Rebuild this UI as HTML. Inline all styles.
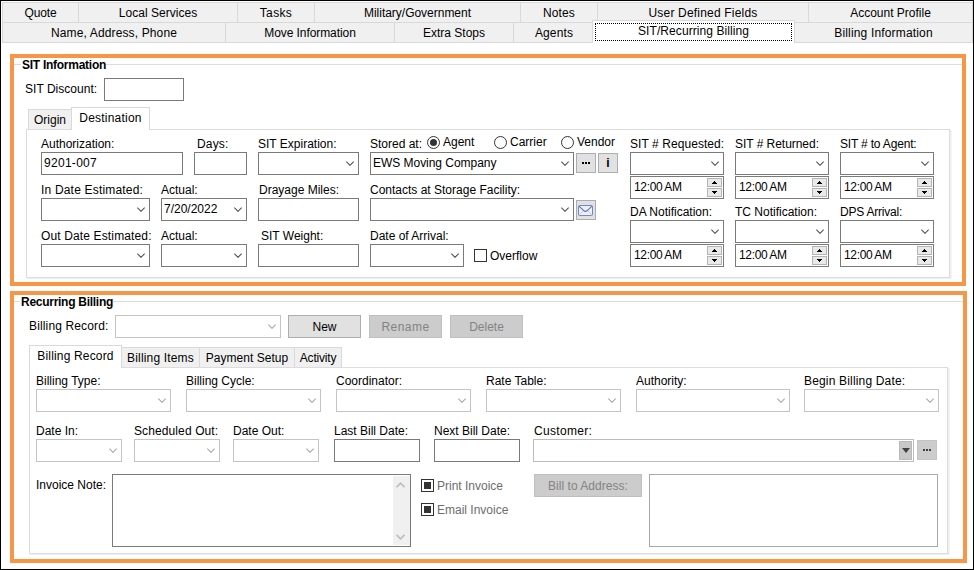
<!DOCTYPE html>
<html><head><meta charset="utf-8"><title>SIT/Recurring Billing</title>
<style>
html,body{margin:0;padding:0;}
body{width:974px;height:570px;position:relative;overflow:hidden;background:#fff;font-family:"Liberation Sans",sans-serif;font-size:12px;color:#000;}
div{position:absolute;box-sizing:border-box;}
.t{white-space:nowrap;line-height:14px;height:14px;font-size:12px;}
.b{font-weight:bold;}
.combo{background:#fff;}
.combo .val{position:absolute;left:2px;top:50%;margin-top:-8px;line-height:14px;white-space:nowrap;}
.chev{position:absolute;right:4px;top:50%;margin-top:-2.1px;}
.btn{text-align:center;font-size:12px;display:flex;align-items:center;justify-content:center;}
.tab{background:#f0f0f0;border:1px solid #d9d9d9;white-space:nowrap;}
.tab span,.stab span{position:absolute;left:0;right:0;text-align:center;white-space:nowrap;}
.stab{background:#fff;border:1px solid #d9d9d9;border-bottom:none;}
.spu,.spd{position:absolute;right:1px;width:15px;height:9px;background:#e9e9e9;border:1px solid #b4b4b4;box-sizing:border-box;}
.spu{top:1px}.spd{bottom:1px}
.ar{position:absolute;left:4px;top:2px;display:block;}
.pane{border:1px solid #dcdcdc;box-shadow:1px 1px 0 #efefef, 2px 1px 0 #f4f4f4;}
</style></head><body>

<div style="left:0px;top:0px;width:974px;height:570px;border:1px solid #000;"></div>
<div class="tab" style="left:2px;top:2px;width:77px;height:21px;"><span style="top:3px;line-height:14px;letter-spacing:-0.134px;">Quote</span></div>
<div class="tab" style="left:78px;top:2px;width:160px;height:21px;"><span style="top:3px;line-height:14px;letter-spacing:0.033px;">Local Services</span></div>
<div class="tab" style="left:237px;top:2px;width:78px;height:21px;"><span style="top:3px;line-height:14px;letter-spacing:0.366px;">Tasks</span></div>
<div class="tab" style="left:314px;top:2px;width:207px;height:21px;"><span style="top:3px;line-height:14px;letter-spacing:-0.019px;">Military/Government</span></div>
<div class="tab" style="left:520px;top:2px;width:78px;height:21px;"><span style="top:3px;line-height:14px;letter-spacing:0.131px;">Notes</span></div>
<div class="tab" style="left:597px;top:2px;width:212px;height:21px;"><span style="top:3px;line-height:14px;letter-spacing:0.191px;">User Defined Fields</span></div>
<div class="tab" style="left:808px;top:2px;width:165px;height:21px;"><span style="top:3px;line-height:14px;">Account Profile</span></div>
<div class="tab" style="left:2px;top:22px;width:224px;height:21px;"><span style="top:3px;line-height:14px;letter-spacing:0.131px;">Name, Address, Phone</span></div>
<div class="tab" style="left:225px;top:22px;width:170px;height:21px;"><span style="top:3px;line-height:14px;letter-spacing:-0.074px;">Move Information</span></div>
<div class="tab" style="left:394px;top:22px;width:120px;height:21px;"><span style="top:3px;line-height:14px;">Extra Stops</span></div>
<div class="tab" style="left:513px;top:22px;width:82px;height:21px;"><span style="top:3px;line-height:14px;letter-spacing:0.143px;">Agents</span></div>
<div class="tab" style="left:794px;top:22px;width:179px;height:21px;"><span style="top:3px;line-height:14px;letter-spacing:0.164px;">Billing Information</span></div>
<div class="stab" style="left:592px;top:20px;width:203px;height:23px;"><span style="top:3px;line-height:14px;letter-spacing:0.077px;">SIT/Recurring Billing</span></div>
<div style="left:595px;top:23px;width:197px;height:18px;border:1px dotted #000;"></div>
<div style="left:10px;top:54px;width:956px;height:232px;border:4px solid #f79646;"></div>
<div style="left:14px;top:64px;width:948px;height:1px;background:#dcdcdc;"></div>
<div class="t b" style="left:21px;top:58px;letter-spacing:-0.265px;background:#fff;padding:0 0 0 1px;">SIT Information</div>
<div class="t" style="left:25px;top:82px;letter-spacing:0.032px;">SIT Discount:</div>
<div class="combo" style="left:104px;top:78px;width:80px;height:23px;border:1px solid #7a7a7a;"></div>
<div class="tab" style="left:28px;top:109px;width:44px;height:21px;"><span style="top:3px;line-height:14px;">Origin</span></div>
<div class="pane" style="left:26px;top:129px;width:924px;height:149px;"></div>
<div class="stab" style="left:71px;top:107px;width:79px;height:23px;"><span style="top:3px;line-height:14px;letter-spacing:0.224px;">Destination</span></div>
<div class="t" style="left:41px;top:137px;">Authorization:</div>
<div class="combo" style="left:41px;top:152px;width:142px;height:23px;border:1px solid #7a7a7a;"><span class="val" style="letter-spacing:0.287px;">9201-007</span></div>
<div class="t" style="left:197px;top:137px;letter-spacing:0.166px;">Days:</div>
<div class="combo" style="left:194px;top:152px;width:53px;height:23px;border:1px solid #7a7a7a;"></div>
<div class="t" style="left:258px;top:137px;">SIT Expiration:</div>
<div class="combo" style="left:258px;top:152px;width:101px;height:23px;border:1px solid #7a7a7a;"><svg class="chev" width="8" height="5" viewBox="0 0 8 5"><path d="M0.3 0.6 L4 4.3 L7.7 0.6" fill="none" stroke="#505050" stroke-width="1.15"/></svg></div>
<div class="t" style="left:370px;top:137px;">Stored at:</div>
<div style="left:427.0px;top:136.0px;width:13px;height:13px;border:1px solid #333;border-radius:50%;background:#fff;"><i style="position:absolute;left:2px;top:2px;width:7px;height:7px;border-radius:50%;background:#333;"></i></div>
<div class="t" style="left:443px;top:135px;">Agent</div>
<div style="left:494.0px;top:136.0px;width:13px;height:13px;border:1px solid #333;border-radius:50%;background:#fff;"></div>
<div class="t" style="left:510px;top:135px;">Carrier</div>
<div style="left:561.0px;top:136.0px;width:13px;height:13px;border:1px solid #333;border-radius:50%;background:#fff;"></div>
<div class="t" style="left:577px;top:135px;">Vendor</div>
<div class="combo" style="left:370px;top:152px;width:204px;height:23px;border:1px solid #7a7a7a;"><span class="val" style="letter-spacing:-0.035px;">EWS Moving Company</span><svg class="chev" width="8" height="5" viewBox="0 0 8 5"><path d="M0.3 0.6 L4 4.3 L7.7 0.6" fill="none" stroke="#505050" stroke-width="1.15"/></svg></div>
<div class="btn" style="left:576px;top:153px;width:20px;height:20px;background:#e1e1e1;border:1px solid #adadad;color:#000;"><svg width="8" height="2" viewBox="0 0 8 2" style="position:relative;top:0px"><rect x="0" y="0" width="2" height="2" fill="#000"/><rect x="3" y="0" width="2" height="2" fill="#000"/><rect x="6" y="0" width="2" height="2" fill="#000"/></svg></div>
<div class="btn" style="left:598px;top:153px;width:20px;height:20px;background:#e1e1e1;border:1px solid #adadad;color:#000;"><b>i</b></div>
<div class="t" style="left:41px;top:183px;letter-spacing:0.185px;">In Date Estimated:</div>
<div class="combo" style="left:41px;top:198px;width:109px;height:23px;border:1px solid #7a7a7a;"><svg class="chev" width="8" height="5" viewBox="0 0 8 5"><path d="M0.3 0.6 L4 4.3 L7.7 0.6" fill="none" stroke="#505050" stroke-width="1.15"/></svg></div>
<div class="t" style="left:161px;top:183px;">Actual:</div>
<div class="combo" style="left:161px;top:198px;width:86px;height:23px;border:1px solid #7a7a7a;"><span class="val" style="">7/20/2022</span><svg class="chev" width="8" height="5" viewBox="0 0 8 5"><path d="M0.3 0.6 L4 4.3 L7.7 0.6" fill="none" stroke="#505050" stroke-width="1.15"/></svg></div>
<div class="t" style="left:259px;top:183px;">Drayage Miles:</div>
<div class="combo" style="left:258px;top:198px;width:101px;height:23px;border:1px solid #7a7a7a;"></div>
<div class="t" style="left:370px;top:183px;">Contacts at Storage Facility:</div>
<div class="combo" style="left:370px;top:198px;width:204px;height:23px;border:1px solid #7a7a7a;"><svg class="chev" width="8" height="5" viewBox="0 0 8 5"><path d="M0.3 0.6 L4 4.3 L7.7 0.6" fill="none" stroke="#505050" stroke-width="1.15"/></svg></div>
<div class="btn" style="left:576px;top:200px;width:20px;height:20px;background:#e1e1e1;border:1px solid #adadad;color:#000;"><svg style="position:absolute;left:1px;top:4px" width="15" height="11" viewBox="0 0 15 11"><rect x="0.5" y="0.5" width="14" height="10" rx="1" fill="#eef1fc" stroke="#7486cb"/><path d="M1 10 L5.6 5.6 M14 10 L9.4 5.6" fill="none" stroke="#c3cbec"/><path d="M1 1.2 L6 5.8 Q7.5 7 9 5.8 L14 1.2" fill="none" stroke="#5b6eb8" stroke-width="1.1"/></svg></div>
<div class="t" style="left:41px;top:229px;letter-spacing:0.137px;">Out Date Estimated:</div>
<div class="combo" style="left:41px;top:244px;width:109px;height:23px;border:1px solid #7a7a7a;"><svg class="chev" width="8" height="5" viewBox="0 0 8 5"><path d="M0.3 0.6 L4 4.3 L7.7 0.6" fill="none" stroke="#505050" stroke-width="1.15"/></svg></div>
<div class="t" style="left:161px;top:229px;">Actual:</div>
<div class="combo" style="left:161px;top:244px;width:86px;height:23px;border:1px solid #7a7a7a;"><svg class="chev" width="8" height="5" viewBox="0 0 8 5"><path d="M0.3 0.6 L4 4.3 L7.7 0.6" fill="none" stroke="#505050" stroke-width="1.15"/></svg></div>
<div class="t" style="left:261px;top:229px;">SIT Weight:</div>
<div class="combo" style="left:258px;top:244px;width:101px;height:23px;border:1px solid #7a7a7a;"></div>
<div class="t" style="left:370px;top:229px;">Date of Arrival:</div>
<div class="combo" style="left:370px;top:244px;width:94px;height:23px;border:1px solid #7a7a7a;"><svg class="chev" width="8" height="5" viewBox="0 0 8 5"><path d="M0.3 0.6 L4 4.3 L7.7 0.6" fill="none" stroke="#505050" stroke-width="1.15"/></svg></div>
<div style="left:474px;top:249px;width:13px;height:13px;border:1px solid #333;background:#fff;"></div>
<div class="t" style="left:490px;top:249px;">Overflow</div>
<div class="t" style="left:630px;top:137px;letter-spacing:0.067px;">SIT # Requested:</div>
<div class="combo" style="left:630px;top:152px;width:94px;height:23px;border:1px solid #7a7a7a;"><svg class="chev" width="8" height="5" viewBox="0 0 8 5"><path d="M0.3 0.6 L4 4.3 L7.7 0.6" fill="none" stroke="#505050" stroke-width="1.15"/></svg></div>
<div class="combo" style="left:630px;top:176px;width:94px;height:23px;border:1px solid #7a7a7a;"><span class="val" style="left:3px;letter-spacing:-0.33px;word-spacing:-0.5px;">12:00 AM</span><span class="spu"><svg class="ar" width="5" height="3" viewBox="0 0 5 3" shape-rendering="crispEdges"><path d="M2 0h1v1h1v1h1v1h-5v-1h1v-1h1z" fill="#000"/></svg></span><span class="spd"><svg class="ar" width="5" height="3" viewBox="0 0 5 3" shape-rendering="crispEdges"><path d="M0 0h5v1h-1v1h-1v1h-1v-1h-1v-1h-1z" fill="#000"/></svg></span></div>
<div class="t" style="left:630px;top:205px;">DA Notification:</div>
<div class="combo" style="left:630px;top:220px;width:94px;height:23px;border:1px solid #7a7a7a;"><svg class="chev" width="8" height="5" viewBox="0 0 8 5"><path d="M0.3 0.6 L4 4.3 L7.7 0.6" fill="none" stroke="#505050" stroke-width="1.15"/></svg></div>
<div class="combo" style="left:630px;top:244px;width:94px;height:23px;border:1px solid #7a7a7a;"><span class="val" style="left:3px;letter-spacing:-0.33px;word-spacing:-0.5px;">12:00 AM</span><span class="spu"><svg class="ar" width="5" height="3" viewBox="0 0 5 3" shape-rendering="crispEdges"><path d="M2 0h1v1h1v1h1v1h-5v-1h1v-1h1z" fill="#000"/></svg></span><span class="spd"><svg class="ar" width="5" height="3" viewBox="0 0 5 3" shape-rendering="crispEdges"><path d="M0 0h5v1h-1v1h-1v1h-1v-1h-1v-1h-1z" fill="#000"/></svg></span></div>
<div class="t" style="left:735px;top:137px;letter-spacing:-0.037px;">SIT # Returned:</div>
<div class="combo" style="left:735px;top:152px;width:94px;height:23px;border:1px solid #7a7a7a;"><svg class="chev" width="8" height="5" viewBox="0 0 8 5"><path d="M0.3 0.6 L4 4.3 L7.7 0.6" fill="none" stroke="#505050" stroke-width="1.15"/></svg></div>
<div class="combo" style="left:735px;top:176px;width:94px;height:23px;border:1px solid #7a7a7a;"><span class="val" style="left:3px;letter-spacing:-0.33px;word-spacing:-0.5px;">12:00 AM</span><span class="spu"><svg class="ar" width="5" height="3" viewBox="0 0 5 3" shape-rendering="crispEdges"><path d="M2 0h1v1h1v1h1v1h-5v-1h1v-1h1z" fill="#000"/></svg></span><span class="spd"><svg class="ar" width="5" height="3" viewBox="0 0 5 3" shape-rendering="crispEdges"><path d="M0 0h5v1h-1v1h-1v1h-1v-1h-1v-1h-1z" fill="#000"/></svg></span></div>
<div class="t" style="left:735px;top:205px;">TC Notification:</div>
<div class="combo" style="left:735px;top:220px;width:94px;height:23px;border:1px solid #7a7a7a;"><svg class="chev" width="8" height="5" viewBox="0 0 8 5"><path d="M0.3 0.6 L4 4.3 L7.7 0.6" fill="none" stroke="#505050" stroke-width="1.15"/></svg></div>
<div class="combo" style="left:735px;top:244px;width:94px;height:23px;border:1px solid #7a7a7a;"><span class="val" style="left:3px;letter-spacing:-0.33px;word-spacing:-0.5px;">12:00 AM</span><span class="spu"><svg class="ar" width="5" height="3" viewBox="0 0 5 3" shape-rendering="crispEdges"><path d="M2 0h1v1h1v1h1v1h-5v-1h1v-1h1z" fill="#000"/></svg></span><span class="spd"><svg class="ar" width="5" height="3" viewBox="0 0 5 3" shape-rendering="crispEdges"><path d="M0 0h5v1h-1v1h-1v1h-1v-1h-1v-1h-1z" fill="#000"/></svg></span></div>
<div class="t" style="left:840px;top:137px;letter-spacing:-0.181px;">SIT # to Agent:</div>
<div class="combo" style="left:840px;top:152px;width:94px;height:23px;border:1px solid #7a7a7a;"><svg class="chev" width="8" height="5" viewBox="0 0 8 5"><path d="M0.3 0.6 L4 4.3 L7.7 0.6" fill="none" stroke="#505050" stroke-width="1.15"/></svg></div>
<div class="combo" style="left:840px;top:176px;width:94px;height:23px;border:1px solid #7a7a7a;"><span class="val" style="left:3px;letter-spacing:-0.33px;word-spacing:-0.5px;">12:00 AM</span><span class="spu"><svg class="ar" width="5" height="3" viewBox="0 0 5 3" shape-rendering="crispEdges"><path d="M2 0h1v1h1v1h1v1h-5v-1h1v-1h1z" fill="#000"/></svg></span><span class="spd"><svg class="ar" width="5" height="3" viewBox="0 0 5 3" shape-rendering="crispEdges"><path d="M0 0h5v1h-1v1h-1v1h-1v-1h-1v-1h-1z" fill="#000"/></svg></span></div>
<div class="t" style="left:840px;top:205px;letter-spacing:-0.224px;">DPS Arrival:</div>
<div class="combo" style="left:840px;top:220px;width:94px;height:23px;border:1px solid #7a7a7a;"><svg class="chev" width="8" height="5" viewBox="0 0 8 5"><path d="M0.3 0.6 L4 4.3 L7.7 0.6" fill="none" stroke="#505050" stroke-width="1.15"/></svg></div>
<div class="combo" style="left:840px;top:244px;width:94px;height:23px;border:1px solid #7a7a7a;"><span class="val" style="left:3px;letter-spacing:-0.33px;word-spacing:-0.5px;">12:00 AM</span><span class="spu"><svg class="ar" width="5" height="3" viewBox="0 0 5 3" shape-rendering="crispEdges"><path d="M2 0h1v1h1v1h1v1h-5v-1h1v-1h1z" fill="#000"/></svg></span><span class="spd"><svg class="ar" width="5" height="3" viewBox="0 0 5 3" shape-rendering="crispEdges"><path d="M0 0h5v1h-1v1h-1v1h-1v-1h-1v-1h-1z" fill="#000"/></svg></span></div>
<div style="left:10px;top:291px;width:957px;height:272px;border:4px solid #f79646;"></div>
<div style="left:14px;top:301px;width:949px;height:1px;background:#dcdcdc;"></div>
<div class="t b" style="left:20px;top:295px;letter-spacing:-0.273px;background:#fff;padding:0 0 0 1px;">Recurring Billing</div>
<div class="t" style="left:29px;top:319px;letter-spacing:0.142px;">Billing Record:</div>
<div class="combo" style="left:115px;top:315px;width:166px;height:23px;border:1px solid #c4c4c4;"><svg class="chev" width="8" height="5" viewBox="0 0 8 5"><path d="M0.3 0.6 L4 4.3 L7.7 0.6" fill="none" stroke="#a6a6a6" stroke-width="1.15"/></svg></div>
<div class="btn" style="left:288px;top:315px;width:73px;height:23px;background:#e1e1e1;border:1px solid #adadad;color:#000;">New</div>
<div class="btn" style="left:369px;top:315px;width:73px;height:23px;background:#cccccc;border:1px solid #bfbfbf;color:#838383;"><span style="letter-spacing:0.440px;">Rename</span></div>
<div class="btn" style="left:450px;top:315px;width:73px;height:23px;background:#cccccc;border:1px solid #bfbfbf;color:#838383;">Delete</div>
<div class="tab" style="left:121px;top:347px;width:79px;height:21px;"><span style="top:3px;line-height:14px;letter-spacing:0.162px;">Billing Items</span></div>
<div class="tab" style="left:199px;top:347px;width:96px;height:21px;"><span style="top:3px;line-height:14px;letter-spacing:0.030px;">Payment Setup</span></div>
<div class="tab" style="left:294px;top:347px;width:48px;height:21px;"><span style="top:3px;line-height:14px;letter-spacing:-0.188px;">Activity</span></div>
<div class="pane" style="left:29px;top:367px;width:919px;height:187px;"></div>
<div class="stab" style="left:29px;top:345px;width:93px;height:23px;"><span style="top:3px;line-height:14px;letter-spacing:0.161px;">Billing Record</span></div>
<div class="t" style="left:36px;top:374px;">Billing Type:</div>
<div class="t" style="left:186px;top:374px;">Billing Cycle:</div>
<div class="t" style="left:336px;top:374px;">Coordinator:</div>
<div class="t" style="left:486px;top:374px;">Rate Table:</div>
<div class="t" style="left:636px;top:374px;">Authority:</div>
<div class="t" style="left:804px;top:374px;letter-spacing:0.171px;">Begin Billing Date:</div>
<div class="combo" style="left:36px;top:389px;width:135px;height:23px;border:1px solid #c4c4c4;"><svg class="chev" width="8" height="5" viewBox="0 0 8 5"><path d="M0.3 0.6 L4 4.3 L7.7 0.6" fill="none" stroke="#a6a6a6" stroke-width="1.15"/></svg></div>
<div class="combo" style="left:186px;top:389px;width:135px;height:23px;border:1px solid #c4c4c4;"><svg class="chev" width="8" height="5" viewBox="0 0 8 5"><path d="M0.3 0.6 L4 4.3 L7.7 0.6" fill="none" stroke="#a6a6a6" stroke-width="1.15"/></svg></div>
<div class="combo" style="left:336px;top:389px;width:135px;height:23px;border:1px solid #c4c4c4;"><svg class="chev" width="8" height="5" viewBox="0 0 8 5"><path d="M0.3 0.6 L4 4.3 L7.7 0.6" fill="none" stroke="#a6a6a6" stroke-width="1.15"/></svg></div>
<div class="combo" style="left:486px;top:389px;width:135px;height:23px;border:1px solid #c4c4c4;"><svg class="chev" width="8" height="5" viewBox="0 0 8 5"><path d="M0.3 0.6 L4 4.3 L7.7 0.6" fill="none" stroke="#a6a6a6" stroke-width="1.15"/></svg></div>
<div class="combo" style="left:636px;top:389px;width:154px;height:23px;border:1px solid #c4c4c4;"><svg class="chev" width="8" height="5" viewBox="0 0 8 5"><path d="M0.3 0.6 L4 4.3 L7.7 0.6" fill="none" stroke="#a6a6a6" stroke-width="1.15"/></svg></div>
<div class="combo" style="left:804px;top:389px;width:135px;height:23px;border:1px solid #c4c4c4;"><svg class="chev" width="8" height="5" viewBox="0 0 8 5"><path d="M0.3 0.6 L4 4.3 L7.7 0.6" fill="none" stroke="#a6a6a6" stroke-width="1.15"/></svg></div>
<div class="t" style="left:36px;top:424px;">Date In:</div>
<div class="t" style="left:134px;top:424px;letter-spacing:0.108px;">Scheduled Out:</div>
<div class="t" style="left:233px;top:424px;">Date Out:</div>
<div class="t" style="left:334px;top:424px;">Last Bill Date:</div>
<div class="t" style="left:434px;top:424px;">Next Bill Date:</div>
<div class="t" style="left:534px;top:424px;letter-spacing:0.317px;">Customer:</div>
<div class="combo" style="left:36px;top:439px;width:86px;height:23px;border:1px solid #c4c4c4;"><svg class="chev" width="8" height="5" viewBox="0 0 8 5"><path d="M0.3 0.6 L4 4.3 L7.7 0.6" fill="none" stroke="#a6a6a6" stroke-width="1.15"/></svg></div>
<div class="combo" style="left:134px;top:439px;width:86px;height:23px;border:1px solid #c4c4c4;"><svg class="chev" width="8" height="5" viewBox="0 0 8 5"><path d="M0.3 0.6 L4 4.3 L7.7 0.6" fill="none" stroke="#a6a6a6" stroke-width="1.15"/></svg></div>
<div class="combo" style="left:233px;top:439px;width:86px;height:23px;border:1px solid #c4c4c4;"><svg class="chev" width="8" height="5" viewBox="0 0 8 5"><path d="M0.3 0.6 L4 4.3 L7.7 0.6" fill="none" stroke="#a6a6a6" stroke-width="1.15"/></svg></div>
<div class="combo" style="left:334px;top:439px;width:86px;height:23px;border:1px solid #7a7a7a;"></div>
<div class="combo" style="left:434px;top:439px;width:86px;height:23px;border:1px solid #7a7a7a;"></div>
<div style="left:533px;top:439px;width:381px;height:23px;border:1px solid #bcbcbc;background:#fff;"><span style="position:absolute;right:1px;top:1px;width:13px;height:19px;background:#c8c8c8;border:1px solid #b8b8b8;box-sizing:border-box;"></span><i style="position:absolute;right:3px;top:8px;width:0;height:0;border-left:4.5px solid transparent;border-right:4.5px solid transparent;border-top:5.5px solid #404040;"></i></div>
<div class="btn" style="left:917px;top:440px;width:20px;height:20px;background:#cccccc;border:1px solid #c4c4c4;"><svg width="8" height="2" viewBox="0 0 8 2" style="position:relative;top:0px"><rect x="0" y="0" width="2" height="2" fill="#404040"/><rect x="3" y="0" width="2" height="2" fill="#404040"/><rect x="6" y="0" width="2" height="2" fill="#404040"/></svg></div>
<div class="t" style="left:36px;top:478px;">Invoice Note:</div>
<div style="left:112px;top:474px;width:299px;height:73px;border:1px solid #7a7a7a;background:#fff;"><span style="position:absolute;right:0;top:1px;width:17px;height:69px;background:#f0f0f0;"></span><svg style="position:absolute;right:5px;top:7px" width="9" height="6" viewBox="0 0 9 6"><path d="M0.5 5.2 L4.5 1.2 L8.5 5.2" fill="none" stroke="#bcbcbc" stroke-width="1.6"/></svg><svg style="position:absolute;right:5px;bottom:6px" width="9" height="6" viewBox="0 0 9 6"><path d="M0.5 0.8 L4.5 4.8 L8.5 0.8" fill="none" stroke="#bcbcbc" stroke-width="1.6"/></svg></div>
<div style="left:421px;top:479px;width:13px;height:13px;border:1px solid #333;background:#fff;"><i style="position:absolute;left:2px;top:2px;width:7px;height:7px;background:#333;"></i></div>
<div class="t" style="left:437px;top:479px;color:#6d6d6d;">Print Invoice</div>
<div style="left:421px;top:503px;width:13px;height:13px;border:1px solid #333;background:#fff;"><i style="position:absolute;left:2px;top:2px;width:7px;height:7px;background:#333;"></i></div>
<div class="t" style="left:437px;top:503px;color:#6d6d6d;">Email Invoice</div>
<div class="btn" style="left:534px;top:474px;width:108px;height:23px;background:#cccccc;border:1px solid #bfbfbf;color:#838383;"><span style="letter-spacing:0.040px;">Bill to Address:</span></div>
<div style="left:649px;top:474px;width:289px;height:73px;border:1px solid #a6a9b2;background:#fff;"></div>
</body></html>
